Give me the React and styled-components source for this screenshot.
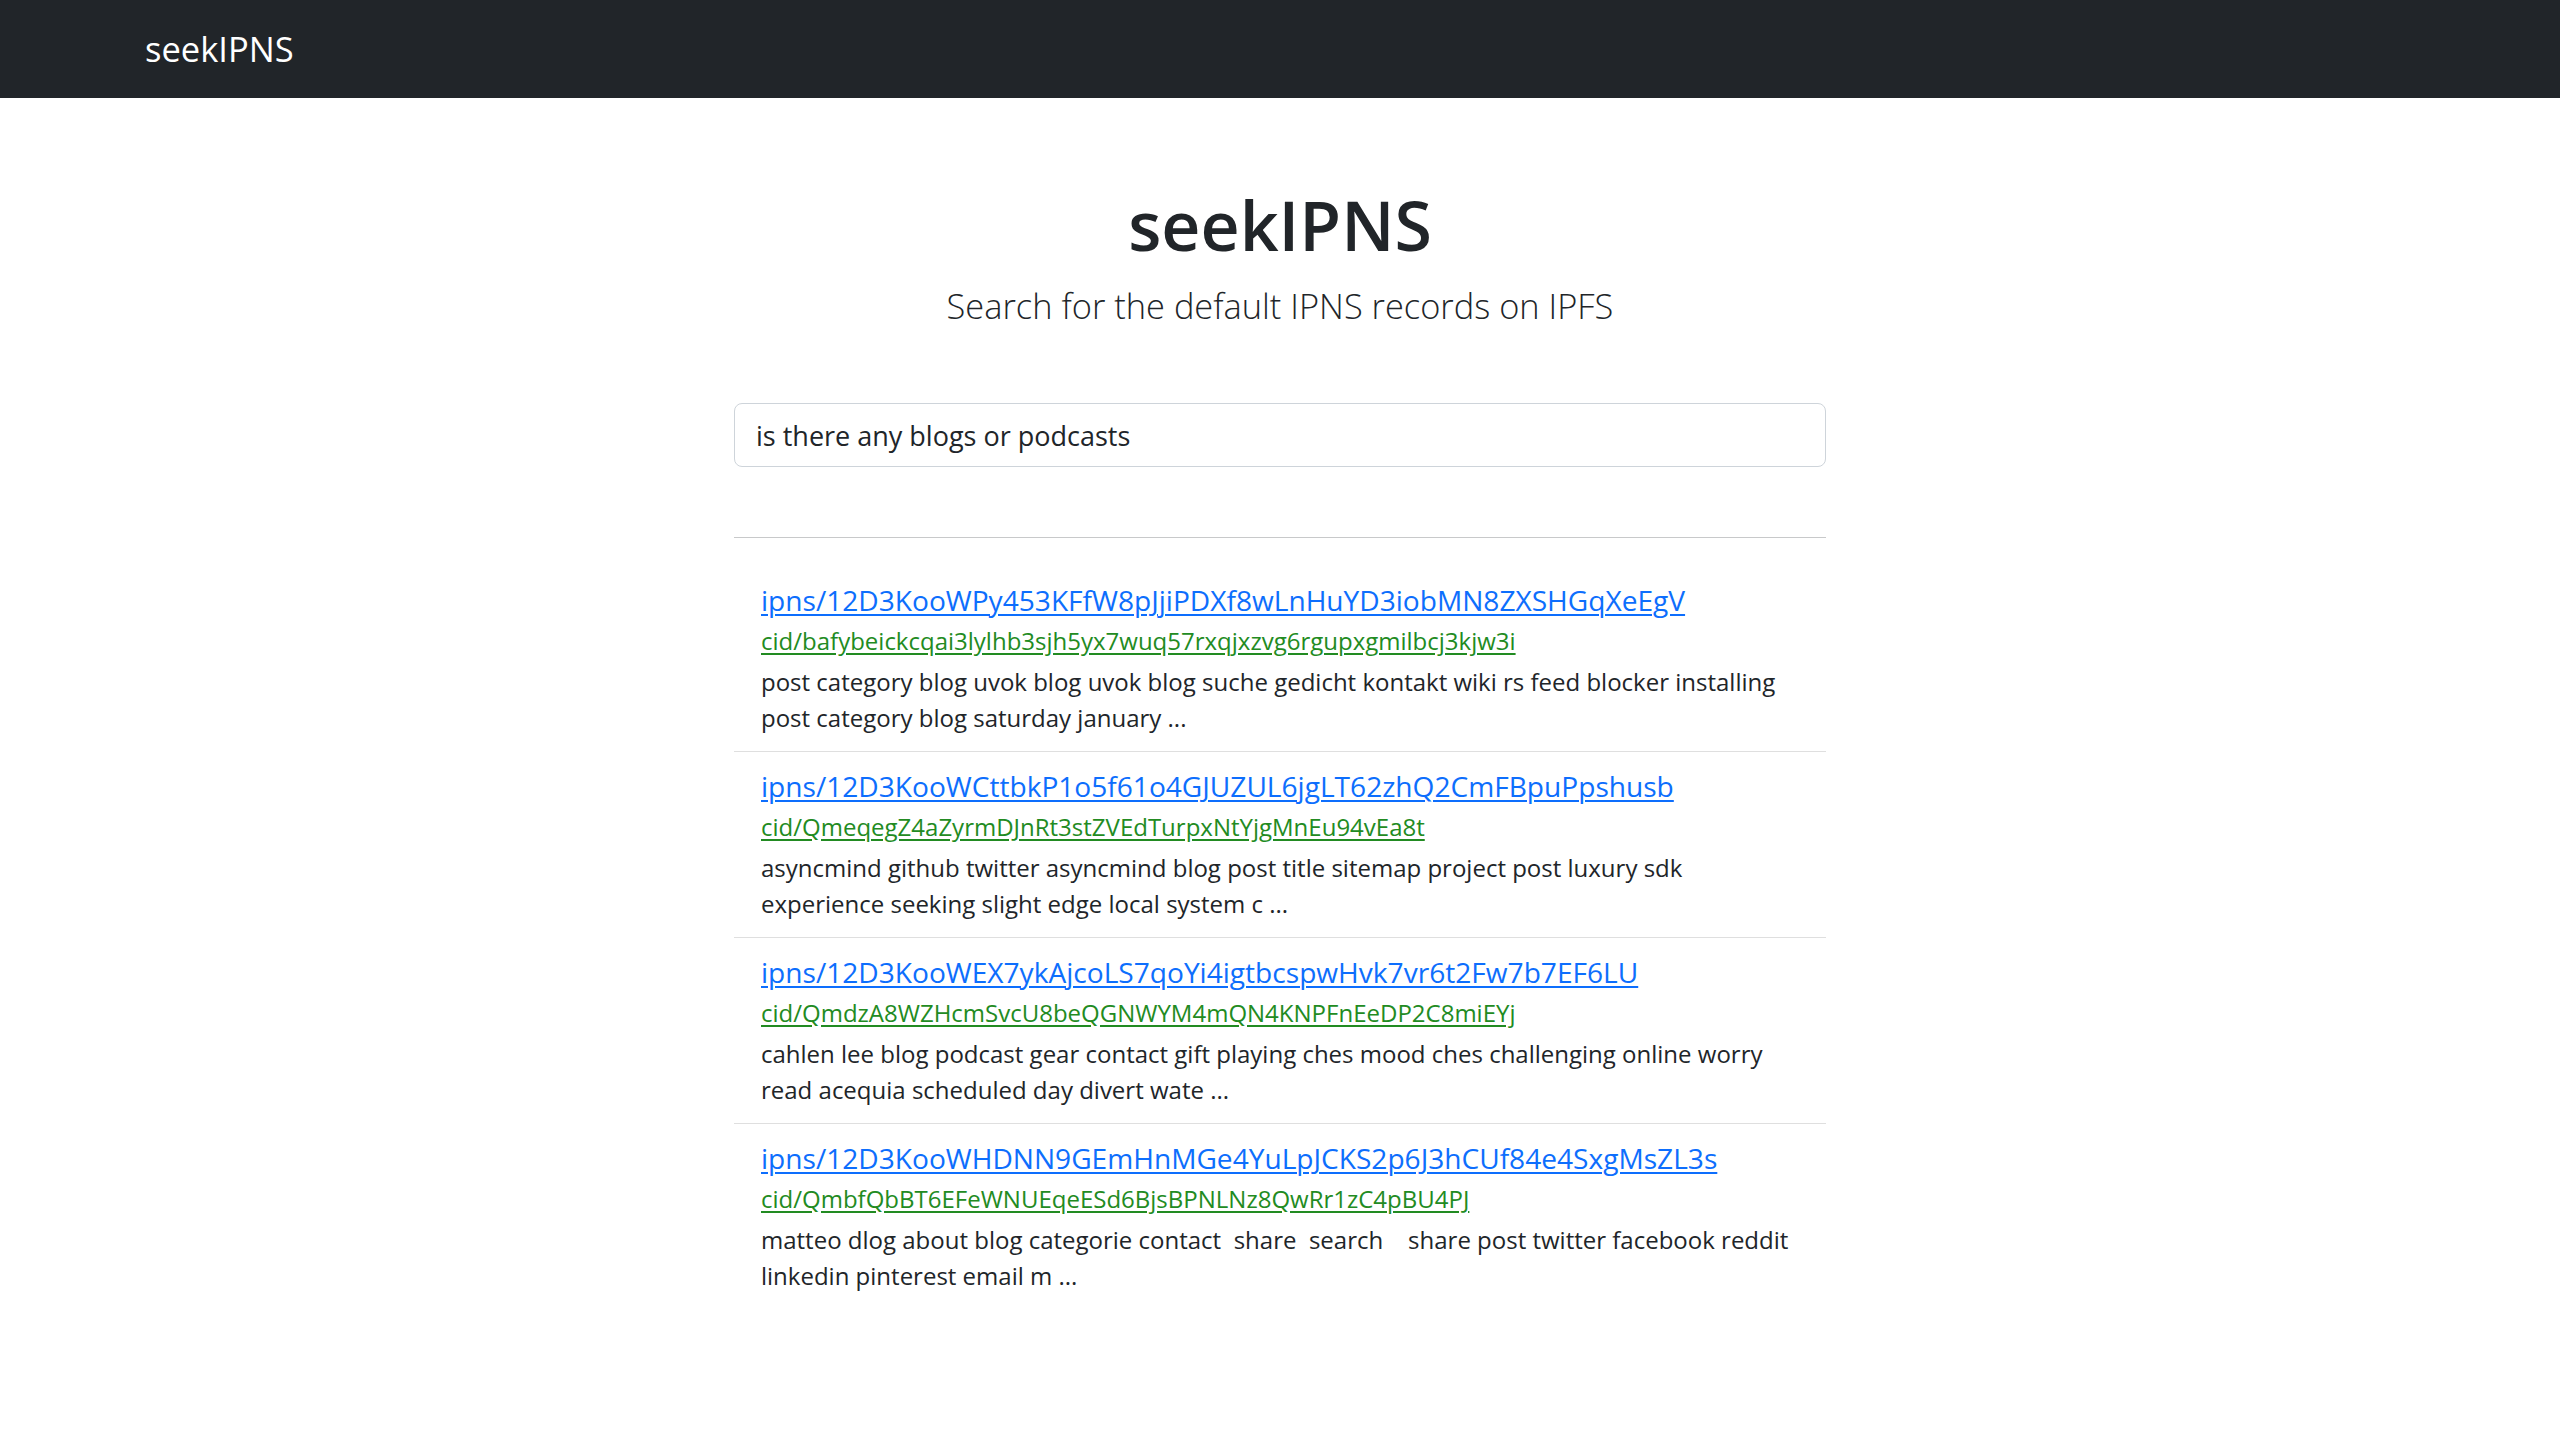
import React from "react";
import styled, { createGlobalStyle } from "styled-components";

const GlobalStyle = createGlobalStyle`
  html, body { margin: 0; padding: 0; background: #fff; }
  body {
    font-family: "Open Sans", "Noto Sans", sans-serif;
    color: #212529;
    -webkit-font-smoothing: antialiased;
  }
  * { box-sizing: border-box; }
`;

const NavBar = styled.nav`
  height: 98px;
  background: #212529;
  display: flex;
  align-items: center;
  padding-left: 145px;
`;

const Brand = styled.a`
  color: #fff;
  font-size: 34.5px;
  line-height: 1.5;
  text-decoration: none;
`;

const Main = styled.main`
  width: 1092px;
  margin: 0 auto;
  display: flex;
  flex-direction: column;
`;

const Hero = styled.header`
  text-align: center;
  padding-top: 84px;
`;

const Title = styled.h1`
  margin: 0;
  font-size: 68px;
  font-weight: 600;
  line-height: 86px;
  color: #212529;
`;

const Lead = styled.p`
  margin: 12px 0 0;
  font-size: 34.4px;
  font-weight: 300;
  line-height: 52px;
  color: #212529;
`;

const SearchInput = styled.input`
  margin-top: 71px;
  width: 100%;
  height: 64px;
  padding: 0 21px;
  font-family: inherit;
  font-size: 27px;
  color: #212529;
  border: 1px solid #ced4da;
  border-radius: 8px;
  background: #fff;
  outline: none;
`;

const Rule = styled.hr`
  margin: 70px 0 28px;
  border: 0;
  border-top: 1px solid #c8c9ca;
  height: 0;
`;

const ResultList = styled.ul`
  list-style: none;
  margin: 0;
  padding: 0;
`;

const ResultItem = styled.li`
  padding: 12px 27px 15px;
  border-bottom: 1px solid #dfdfdf;
  &:last-child { border-bottom: 0; }
`;

const IpnsLink = styled.a`
  display: block;
  font-size: 28.1px;
  line-height: 45px;
  color: #0d6efd;
  text-decoration: underline;
  text-underline-offset: 3px;
  text-decoration-thickness: 1.5px;
`;

const CidLink = styled.a`
  display: block;
  font-size: 24px;
  line-height: 36px;
  color: #228b22;
  text-decoration: underline;
  text-underline-offset: 3px;
  margin-bottom: 5px;
`;

const Snippet = styled.p`
  margin: 0;
  font-size: 24px;
  line-height: 36px;
  color: #212529;
  white-space: pre-wrap;
`;

const results = [
  {
    ipns: "ipns/12D3KooWPy453KFfW8pJjiPDXf8wLnHuYD3iobMN8ZXSHGqXeEgV",
    cid: "cid/bafybeickcqai3lylhb3sjh5yx7wuq57rxqjxzvg6rgupxgmilbcj3kjw3i",
    text: "post category blog uvok blog uvok blog suche gedicht kontakt wiki rs feed blocker installing post category blog saturday january ...",
  },
  {
    ipns: "ipns/12D3KooWCttbkP1o5f61o4GJUZUL6jgLT62zhQ2CmFBpuPpshusb",
    cid: "cid/QmeqegZ4aZyrmDJnRt3stZVEdTurpxNtYjgMnEu94vEa8t",
    text: "asyncmind github twitter asyncmind blog post title sitemap project post luxury sdk experience seeking slight edge local system c ...",
  },
  {
    ipns: "ipns/12D3KooWEX7ykAjcoLS7qoYi4igtbcspwHvk7vr6t2Fw7b7EF6LU",
    cid: "cid/QmdzA8WZHcmSvcU8beQGNWYM4mQN4KNPFnEeDP2C8miEYj",
    text: "cahlen lee blog podcast gear contact gift playing ches mood ches challenging online worry read acequia scheduled day divert wate ...",
  },
  {
    ipns: "ipns/12D3KooWHDNN9GEmHnMGe4YuLpJCKS2p6J3hCUf84e4SxgMsZL3s",
    cid: "cid/QmbfQbBT6EFeWNUEqeESd6BjsBPNLNz8QwRr1zC4pBU4PJ",
    text: "matteo dlog about blog categorie contact  share  search    share post twitter facebook reddit linkedin pinterest email m ...",
  },
];

export default function App() {
  return (
    <>
      <GlobalStyle />
      <NavBar>
        <Brand href="#">seekIPNS</Brand>
      </NavBar>
      <Main>
        <Hero>
          <Title>seekIPNS</Title>
          <Lead>Search for the default IPNS records on IPFS</Lead>
        </Hero>
        <SearchInput defaultValue="is there any blogs or podcasts" />
        <Rule />
        <ResultList>
          {results.map((r) => (
            <ResultItem key={r.ipns}>
              <IpnsLink href="#">{r.ipns}</IpnsLink>
              <CidLink href="#">{r.cid}</CidLink>
              <Snippet>{r.text}</Snippet>
            </ResultItem>
          ))}
        </ResultList>
      </Main>
    </>
  );
}
